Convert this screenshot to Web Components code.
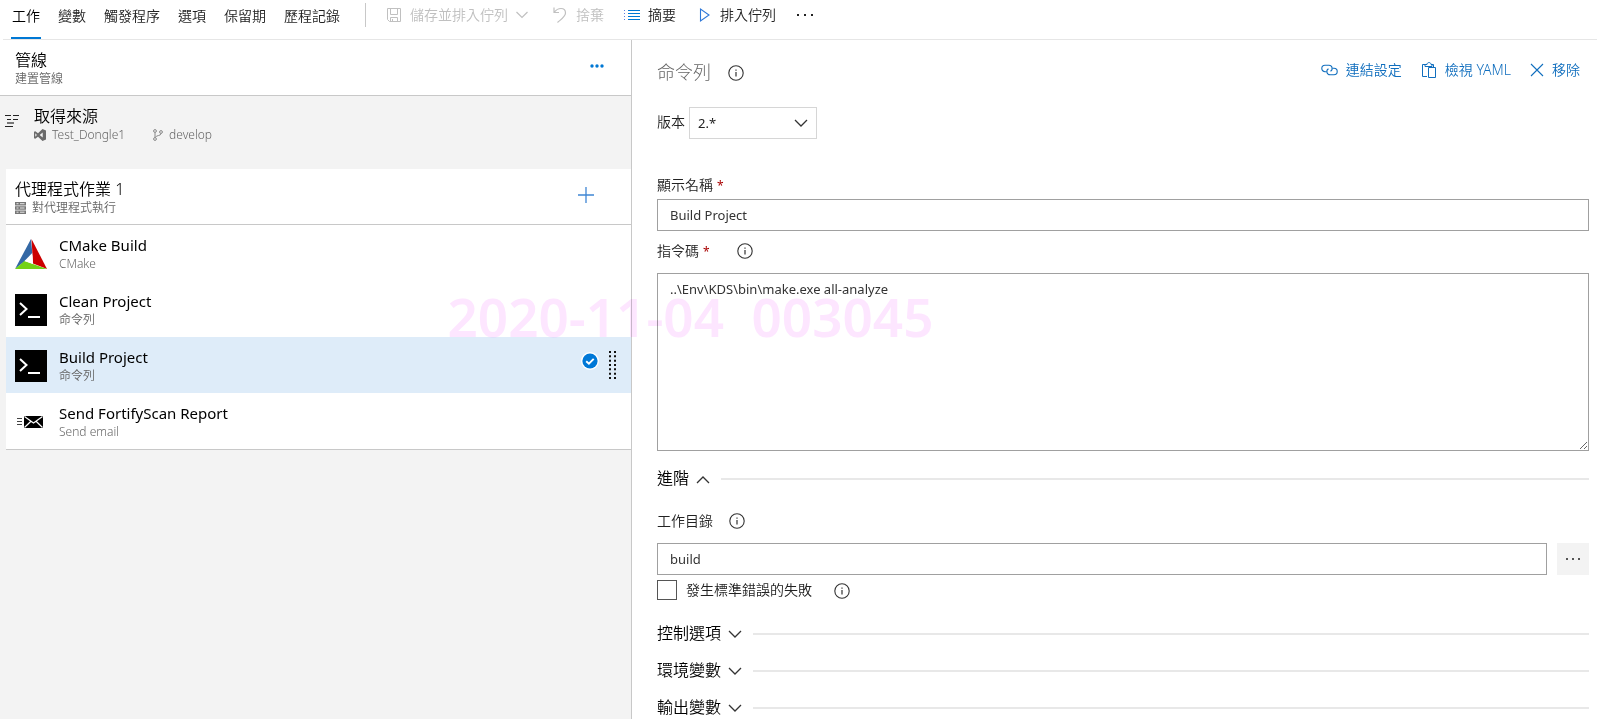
<!DOCTYPE html>
<html lang="zh-Hant">
<head>
<meta charset="utf-8">
<meta name="viewport" content="width=device-width, initial-scale=1">
<title>建置管線</title>
<style>
  html, body { margin: 0; min-height: 100%; }
  body {
    font: 350 14px/20px "Noto Sans", "Noto Sans CJK TC", sans-serif;
    color: #222;
    background: #fff;
    --accent: #0078d4;
    --link: #106ebe;
    --muted: #666;
    --line: #c8c8c8;
    --shade: #f3f3f3;
  }
</style>
</head>
<body>
<pipeline-editor></pipeline-editor>

<script>
const ICONS = {
  save: [16, 16, '<path d="M1.5 1.5h13v13h-11l-2-2zM4.5 1.5v6h7v-6M4.5 14.5v-4h7v4M6.5 12v2.500" fill="none" stroke="currentColor"/>'],
  down: [16, 16, '<path d="M.5 5 6 10.500 11.500 5" fill="none" stroke="currentColor" stroke-width="1.200"/>'],
  undo: [16, 16, '<path d="M2 .5v5h5M2.300 5.200C4 3 6.500 1.500 9 1.500c3 0 4.500 2 4.500 4.500C13.500 9.500 9.500 12 5.500 15.500" fill="none" stroke="currentColor" stroke-width="1.200"/>'],
  list: [16, 16, '<path d="M4 3.500h12M4 6.500h12M4 9.500h12M4 12.500h12" stroke="#0078d4"/><path d="M0 3.500h1M0 6.500h1M0 9.500h1M0 12.500h1" stroke="#5a7de0"/>'],
  play: [16, 16, '<path d="M4.500 2v12L13 8z" fill="none" stroke="#2f78d8" stroke-width="1.100"/>'],
  more: [18, 4, '<path d="M1 1h2v2H1zM8 1h2v2H8zM15 1h2v2h-2z" fill="currentColor"/>'],
  ellipsis: [16, 4, '<path d="M1 1h2v2H1zM7 1h2v2H7zM13 1h2v2h-2z" fill="#555"/>'],
  dots: [14, 4, '<circle cx="2" cy="2" r="1.700"/><circle cx="7" cy="2" r="1.700"/><circle cx="12" cy="2" r="1.700"/>'],
  source: [14, 14, '<path d="M0 1.500h6M8 1.500h6M2 5.500h4M8 5.500h5M0 12.500h8" stroke="#222"/><path d="M2 9h7" stroke="#777" stroke-width="2"/>'],
  vs: [12, 12, '<path d="M8.500 0 12 1.400v9.200L8.500 12 4 7.700 1.300 9.800 0 9.200V2.800l1.300-.6L4 4.300zM8.700 3.500 5.700 6l3 2.500zM1.300 4.300v3.400L2.900 6z" fill="#6b6b6b" fill-rule="evenodd"/>'],
  branch: [10, 12, '<g fill="none" stroke="#888"><circle cx="2" cy="2" r="1.400"/><circle cx="2" cy="10" r="1.400"/><circle cx="8" cy="3" r="1.400"/><path d="M2 3.500v5M8 4.500C8 7.200 3 6 2.200 8.500"/></g>'],
  server: [11, 12, '<path d="M0 0h11v3.500H0zM0 4.300h11v3.500H0zM0 8.500h11V12H0z" fill="#777"/><path d="M1.500 1.700h2M5 1.700h4.500M1.500 6h2M5 6h4.500M1.500 10.200h2M5 10.200h4.500" stroke="#e8e8e8"/>'],
  plus: [16, 16, '<path d="M8 0v16M0 8h16" stroke="#3f86d4" stroke-width="1.300"/>'],
  cmake: [32, 32, '<path d="M16 1 0 31l17.500-14z" fill="#3468a5"/><path d="M16.500 1 32 31 18 25.500z" fill="#c00"/><path d="M0 31 9.500 23 32 31z" fill="#73d216"/><path d="M17.200 15 9.500 23l8.500 3z" fill="#fff"/>'],
  terminal: [32, 32, '<path d="M0 0h32v32H0z" fill="#000"/><path d="M5 9l6.500 6L5 21" fill="none" stroke="#fff" stroke-width="2"/><path d="M13 23h12" stroke="#fff" stroke-width="2"/>'],
  mail: [32, 32, '<path d="M2 12.500h5M2 15.500h5M2 18.500h5" stroke="#444"/><path d="M9 10h19v12H9z" fill="#000"/><path d="M9.500 10.500l9 6.500 9-6.500M9.500 21.500l6.200-6M27.500 21.500l-6.200-6" fill="none" stroke="#fff" stroke-width="1.200"/>'],
  check: [18, 18, '<circle cx="9" cy="9" r="9" fill="#fff"/><circle cx="9" cy="9" r="7.600" fill="#0078d7"/><path d="M5.200 9.200 7.900 11.700 12.700 6.800" fill="none" stroke="#fff" stroke-width="1.900"/>'],
  grip: [8, 28, '<path d="M1 0v28M6 0v28" stroke="#111" stroke-width="2" stroke-dasharray="2 2.330"/>'],
  info: [16, 16, '<circle cx="8" cy="8" r="7.200" fill="none" stroke="currentColor" stroke-width="1.100"/><path d="M8 7v4.500M8 4.500v1.200" stroke="currentColor" stroke-width="1.200"/>'],
  link: [17, 12, '<g fill="none" stroke="currentColor" stroke-width="1.100"><path d="M5.500 7.700H4A3.200 3.200 0 0 1 4 1.300h4a3.200 3.200 0 0 1 1.500 6"/><path d="M11.500 4.300H13a3.200 3.200 0 0 1 0 6.400H9a3.200 3.200 0 0 1-1.500-6"/></g>'],
  clipboard: [16, 16, '<path d="M6 14.500H1.500v-12H4M10 2.500h2.500V5M4 4.500v-2h2c0-2.600 4-2.600 4 0h1v2zM7.500 5.500h7v10h-7z" fill="none" stroke="currentColor"/>'],
  close: [14, 14, '<path d="M1 1l12 12M13 1 1 13" stroke="currentColor" stroke-width="1.100"/>'],
  chevdown: [14, 14, '<path d="M1 4l6 6 6-6" fill="none" stroke="#333" stroke-width="1.300"/>'],
  chevup: [14, 14, '<path d="M1 11l6-6 6 6" fill="none" stroke="#333" stroke-width="1.300"/>']
};

const BASE = `
  *, *::before, *::after { box-sizing: border-box; }
  button { font: inherit; color: inherit; background: none; border: 0; padding: 0; margin: 0; cursor: pointer; }
  a { color: inherit; text-decoration: none; }
`;

class Base extends HTMLElement {
  constructor() {
    super();
    this.attachShadow({ mode: 'open' });
  }
  connectedCallback() {
    this.shadowRoot.innerHTML = `<style>${BASE}${this.css()}</style>${this.html()}`;
  }
  attr(name) { return this.getAttribute(name) || ''; }
}
const define = (tag, css, html) => customElements.define(tag, class extends Base {
  css() { return css; }
  html() { return html(this); }
});

define('ui-icon', `
  :host { display: inline-flex; flex: none; }
  svg { display: block; fill: currentColor; }
`, el => {
  const [w, h, body] = ICONS[el.attr('name')];
  return `<svg width="${w}" height="${h}" viewBox="0 0 ${w} ${h}" aria-hidden="true">${body}</svg>`;
});

define('tool-button', `
  :host { display: block; }
  button { display: flex; align-items: center; gap: 8px; height: 30px; white-space: nowrap; }
  button:disabled { color: #c0c0c0; cursor: default; }
`, el => `<button type="button" ${el.hasAttribute('disabled') ? 'disabled' : ''} aria-label="${el.attr('label')}">
  <ui-icon name="${el.attr('icon')}"></ui-icon><slot></slot>${el.hasAttribute('menu') ? '<ui-icon name="down"></ui-icon>' : ''}</button>`);

define('editor-tabs', `
  :host { display: flex; margin-left: 3px; padding-left: 8px; border-bottom: 1px solid #e6e6e6; }
  nav { display: flex; gap: 16px; }
  nav a { padding: 0 1px 5px; line-height: 32px; border-bottom: 2px solid transparent; white-space: nowrap; }
  nav a[aria-current] { border-color: var(--accent); color: #000; }
  .tools { display: flex; gap: 20px; height: 30px; margin-left: 24px; }
  .rule { width: 1px; height: 24px; align-self: center; background: var(--line); }
`, () => `<nav>
    <a href="#tasks" aria-current="page">工作</a><a href="#variables">變數</a><a href="#triggers">觸發程序</a>
    <a href="#options">選項</a><a href="#retention">保留期</a><a href="#history">歷程記錄</a>
  </nav>
  <div class="tools">
    <span class="rule"></span>
    <tool-button icon="save" label="儲存並排入佇列" menu disabled>儲存並排入佇列</tool-button>
    <tool-button icon="undo" label="捨棄" disabled>捨棄</tool-button>
    <tool-button icon="list" label="摘要">摘要</tool-button>
    <tool-button icon="play" label="排入佇列">排入佇列</tool-button>
    <tool-button icon="more" label="更多"></tool-button>
  </div>`);

define('item-text', `
  :host { display: block; flex: 1; min-width: 0; }
  .title { font-size: 15px; font-weight: 400; line-height: 20px; color: #000; }
  :host([cjk]) .title { font-size: 16px; font-weight: 350; }
  .sub { display: flex; align-items: center; gap: 6px; font-size: 12px; line-height: 18px; color: var(--muted); }
`, () => `<div class="title"><slot></slot></div><div class="sub"><slot name="sub"></slot></div>`);

define('task-row', `
  :host { display: flex; align-items: center; gap: 12px; height: 56px; padding: 2px 14px 0 9px; }
  :host([selected]) { background: #deecf9; }
  .marks { display: flex; align-items: center; gap: 10px; padding-bottom: 2px; }
  .marks ui-icon:first-child { padding-bottom: 8px; }
`, el => `<ui-icon name="${el.attr('icon')}"></ui-icon>
  <item-text>${el.attr('label')}<span slot="sub">${el.attr('kind')}</span></item-text>
  ${el.hasAttribute('selected') ? '<div class="marks"><ui-icon name="check"></ui-icon><ui-icon name="grip"></ui-icon></div>' : ''}`);

define('task-panel', `
  :host { display: block; background: var(--shade); border-right: 1px solid var(--line); }
  header, .source, .job { display: flex; align-items: center; }
  header { height: 56px; padding: 2px 27px 0 15px; background: #fff; border-bottom: 1px solid var(--line); }
  header button { color: var(--accent); display: flex; padding-bottom: 6px; }
  .source { gap: 15px; height: 73px; padding: 0 16px 15px 5px; }
  .source > ui-icon { padding-bottom: 8px; }
  .repo { margin-right: 22px; }
  .card { margin-left: 6px; background: #fff; border-bottom: 1px solid var(--line); }
  .job { height: 56px; padding: 2px 37px 0 9px; border-bottom: 1px solid var(--line); }
  .job button { display: flex; padding-bottom: 6px; }
`, () => `<header>
    <item-text cjk>管線<span slot="sub">建置管線</span></item-text>
    <button type="button" aria-label="更多"><ui-icon name="dots"></ui-icon></button>
  </header>
  <div class="source">
    <ui-icon name="source"></ui-icon>
    <item-text cjk>取得來源
      <ui-icon slot="sub" name="vs"></ui-icon><span slot="sub" class="repo">Test_Dongle1</span>
      <ui-icon slot="sub" name="branch"></ui-icon><span slot="sub">develop</span>
    </item-text>
  </div>
  <div class="card">
    <div class="job">
      <item-text cjk>代理程式作業 1<ui-icon slot="sub" name="server"></ui-icon><span slot="sub">對代理程式執行</span></item-text>
      <button type="button" aria-label="新增工作"><ui-icon name="plus"></ui-icon></button>
    </div>
    <task-row icon="cmake" label="CMake Build" kind="CMake"></task-row>
    <task-row icon="terminal" label="Clean Project" kind="命令列"></task-row>
    <task-row icon="terminal" label="Build Project" kind="命令列" selected></task-row>
    <task-row icon="mail" label="Send FortifyScan Report" kind="Send email"></task-row>
  </div>`);

define('info-button', `
  :host { display: inline-flex; color: #333; }
  button { display: flex; }
`, () => `<button type="button" aria-label="說明"><ui-icon name="info"></ui-icon></button>`);

define('form-field', `
  :host { display: block; }
  .head { display: flex; align-items: center; gap: 16px; height: 20px; margin-bottom: 4px; }
  :host([info]) .head { margin-bottom: 12px; }
  :host([info][required]) .head { gap: 27px; }
  .star { font-size: 12px; font-weight: 400; line-height: 12px; color: #a80000; margin-left: 4px; }
  .row { display: flex; gap: 10px; }
  input, textarea {
    display: block; flex: 1; min-width: 0; margin: 0; padding: 0 12px; font: inherit; font-size: 13px; font-weight: 400; color: #333;
    background: #fff; border: 1px solid #a0a0a0; border-radius: 0; outline: 0;
  }
  input { height: 32px; }
  textarea { height: 178px; padding: 5px 12px; }
  .browse { display: flex; align-items: center; justify-content: center; width: 32px; background: var(--shade); }
`, el => {
  const value = el.attr('value');
  const control = el.hasAttribute('multiline')
    ? `<textarea id="c">${value}</textarea>`
    : `<input id="c" type="text" value="${value}">`;
  return `<div class="head">
    <label for="c">${el.attr('label')}${el.hasAttribute('required') ? '<span class="star">*</span>' : ''}</label>
    ${el.hasAttribute('info') ? '<info-button></info-button>' : ''}</div>
  <div class="row">${control}${el.hasAttribute('browse')
    ? '<button class="browse" type="button" aria-label="瀏覽"><ui-icon name="ellipsis"></ui-icon></button>' : ''}</div>`;
});

define('section-toggle', `
  :host { display: block; }
  button { display: flex; align-items: center; width: 100%; height: 20px; font-size: 16px; color: #000; }
  .name { padding-bottom: 2px; }
  ui-icon { margin: 0 11px 0 7px; }
  .rule { flex: 1; height: 2px; background: #e8e8e8; }
`, el => `<button type="button" aria-expanded="${el.hasAttribute('open')}"><span class="name"><slot></slot></span>
  <ui-icon name="${el.hasAttribute('open') ? 'chevup' : 'chevdown'}"></ui-icon><span class="rule"></span></button>`);

define('task-details', `
  :host { display: block; padding: 20px 8px 0 25px; }
  header { display: flex; align-items: center; gap: 17px; height: 24px; }
  header info-button { padding-top: 2px; }
  h1 { margin: 0; font-size: 18px; line-height: 24px; font-weight: 300; color: var(--muted); }
  .actions { display: flex; gap: 19px; margin-left: auto; padding: 0 9px 4px 0; color: var(--link); }
  .version { display: flex; align-items: center; gap: 4px; margin: 23px 0 36px; }
  .version label { padding-bottom: 2px; }
  .select { display: grid; width: 128px; }
  .select > * { grid-area: 1 / 1; }
  .select ui-icon { align-self: center; justify-self: end; margin-right: 9px; pointer-events: none; }
  select { appearance: none; width: 100%; height: 32px; padding: 0 28px 0 8px; font: inherit; font-size: 13px; font-weight: 400;
    color: #222; background: #fff; border: 1px solid #d6d6d6; border-radius: 0; }
  .script { margin: 10px 0 18px; }
  .folder { margin: 22px 0 5px; }
  .stderr { display: flex; align-items: center; gap: 22px; }
  .stderr info-button { padding-top: 2px; }
  .stderr label { display: flex; align-items: center; gap: 9px; }
  input { appearance: none; width: 20px; height: 20px; margin: 0; background: #fff; border: 1px solid #555; }
  .sections { display: grid; gap: 17px; margin-top: 24px; }
`, () => `<header>
    <h1>命令列</h1><info-button></info-button>
    <div class="actions">
      <tool-button icon="link" label="連結設定">連結設定</tool-button>
      <tool-button icon="clipboard" label="檢視 YAML">檢視 YAML</tool-button>
      <tool-button icon="close" label="移除">移除</tool-button>
    </div>
  </header>
  <div class="version">
    <label for="version">版本</label>
    <div class="select"><select id="version"><option>2.*</option></select><ui-icon name="chevdown"></ui-icon></div>
  </div>
  <form-field label="顯示名稱" value="Build Project" required></form-field>
  <form-field class="script" label="指令碼" value="..\\Env\\KDS\\bin\\make.exe all-analyze" multiline required info></form-field>
  <section-toggle open>進階</section-toggle>
  <form-field class="folder" label="工作目錄" value="build" info browse></form-field>
  <div class="stderr"><label><input type="checkbox">發生標準錯誤的失敗</label><info-button></info-button></div>
  <div class="sections">
    <section-toggle>控制選項</section-toggle>
    <section-toggle>環境變數</section-toggle>
    <section-toggle>輸出變數</section-toggle>
  </div>`);

define('time-stamp', `
  :host { position: absolute; inset: 0; display: flex; align-items: center; justify-content: center; padding: 0 216px 86px 0;
    font-size: 53px; font-weight: 600; line-height: 60px; color: #fde6ff; mix-blend-mode: multiply; white-space: pre; pointer-events: none; }
`, () => `<slot></slot>`);

define('pipeline-editor', `
  :host { display: flex; flex-direction: column; position: relative; min-height: 100vh; }
  main { flex: 1; display: grid; grid-template-columns: 632fr 965fr; }
`, () => `<editor-tabs></editor-tabs>
  <main><task-panel></task-panel><task-details></task-details></main>
  <time-stamp>2020-11-04  003045</time-stamp>`);
</script>
</body>
</html>
